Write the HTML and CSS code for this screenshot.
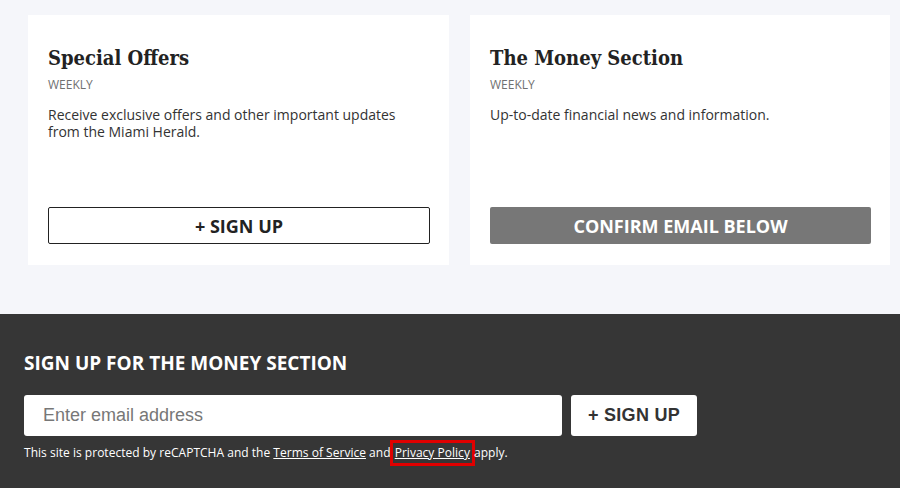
FILE: index.html
```html
<!DOCTYPE html>
<html>
<head>
<meta charset="utf-8">
<link rel="stylesheet" href="styles.css">
</head>
<body>
<main class="cards">
  <section class="card">
    <h2 class="card-title">Special Offers</h2>
    <div class="freq">WEEKLY</div>
    <p class="desc">Receive exclusive offers and other important updates from the Miami Herald.</p>
    <button class="btn-outline">+ SIGN UP</button>
  </section>
  <section class="card">
    <h2 class="card-title">The Money Section</h2>
    <div class="freq">WEEKLY</div>
    <p class="desc">Up-to-date financial news and information.</p>
    <button class="btn-confirm">CONFIRM EMAIL BELOW</button>
  </section>
</main>
<footer class="signup">
  <h3 class="signup-title">SIGN UP FOR THE MONEY SECTION</h3>
  <form class="signup-row">
    <input class="email" type="text" placeholder="Enter email address">
    <button class="btn-submit" type="button">+ SIGN UP</button>
  </form>
  <p class="legal">This site is protected by reCAPTCHA and the <a href="#">Terms of Service</a> and <a href="#" class="focused">Privacy Policy</a> apply.</p>
</footer>
</body>
</html>
```
FILE: styles.css
```css
html, body {
  margin: 0;
  padding: 0;
}
body {
  background: #f5f6fa;
  font-family: "Open Sans", "Noto Sans", sans-serif;
  width: 900px;
  height: 488px;
  overflow: hidden;
}
.cards {
  display: grid;
  grid-template-columns: 421px 420px;
  gap: 21px;
  padding: 15px 0 0 28px;
  height: 314px;
  box-sizing: border-box;
}
.card {
  background: #fff;
  height: 250px;
  box-sizing: border-box;
  padding: 33px 19px 21px 20px;
  display: flex;
  flex-direction: column;
}
.card-title {
  font-family: "DejaVu Serif Condensed", "DejaVu Serif", serif;
  font-stretch: condensed;
  font-weight: bold;
  font-size: 20px;
  line-height: 20px;
  color: #222;
  margin: 0;
}
.freq {
  font-size: 12px;
  line-height: 16px;
  color: #707070;
  margin-top: 9px;
}
.desc {
  font-size: 14px;
  line-height: 17px;
  color: #333;
  margin: 13px 0 0 0;
}
.btn-outline, .btn-confirm {
  margin-top: auto;
  height: 37px;
  box-sizing: border-box;
  font-family: "Open Sans", sans-serif;
  font-weight: bold;
  font-size: 18px;
  border-radius: 2px;
  cursor: pointer;
  padding: 0;
}
.btn-outline {
  background: #fff;
  color: #222;
  border: 1px solid #222;
}
.btn-confirm {
  background: #777;
  color: #fff;
  border: none;
}
.signup {
  background: #363636;
  height: 174px;
  box-sizing: border-box;
  padding: 36px 24px 0 24px;
}
.signup-title {
  margin: 0;
  color: #fff;
  font-size: 19px;
  line-height: 26px;
  font-weight: bold;
}
.signup-row {
  display: flex;
  gap: 9px;
  margin: 19px 0 0 0;
}
.email {
  width: 538px;
  height: 41px;
  box-sizing: border-box;
  border: none;
  border-radius: 3px;
  padding: 0 19px;
  font-family: "Liberation Sans", Arial, sans-serif;
  font-size: 18px;
  outline: none;
}
.email::placeholder {
  color: #777;
}
.btn-submit {
  width: 126px;
  height: 41px;
  border: none;
  border-radius: 3px;
  background: #fff;
  color: #333;
  font-family: "Liberation Sans", Arial, sans-serif;
  font-weight: bold;
  font-size: 18px;
  letter-spacing: 0.3px;
  padding: 0;
}
.legal {
  margin: 8px 0 0 0;
  color: #fff;
  font-size: 12px;
  line-height: 18px;
  letter-spacing: 0.02px;
}
.legal a {
  color: #fff;
  text-decoration: underline;
}
.legal a.focused {
  display: inline-block;
  line-height: 18px;
  outline: 3px solid #e00000;
  outline-offset: 1px;
  padding: 0 1px;
}
```
